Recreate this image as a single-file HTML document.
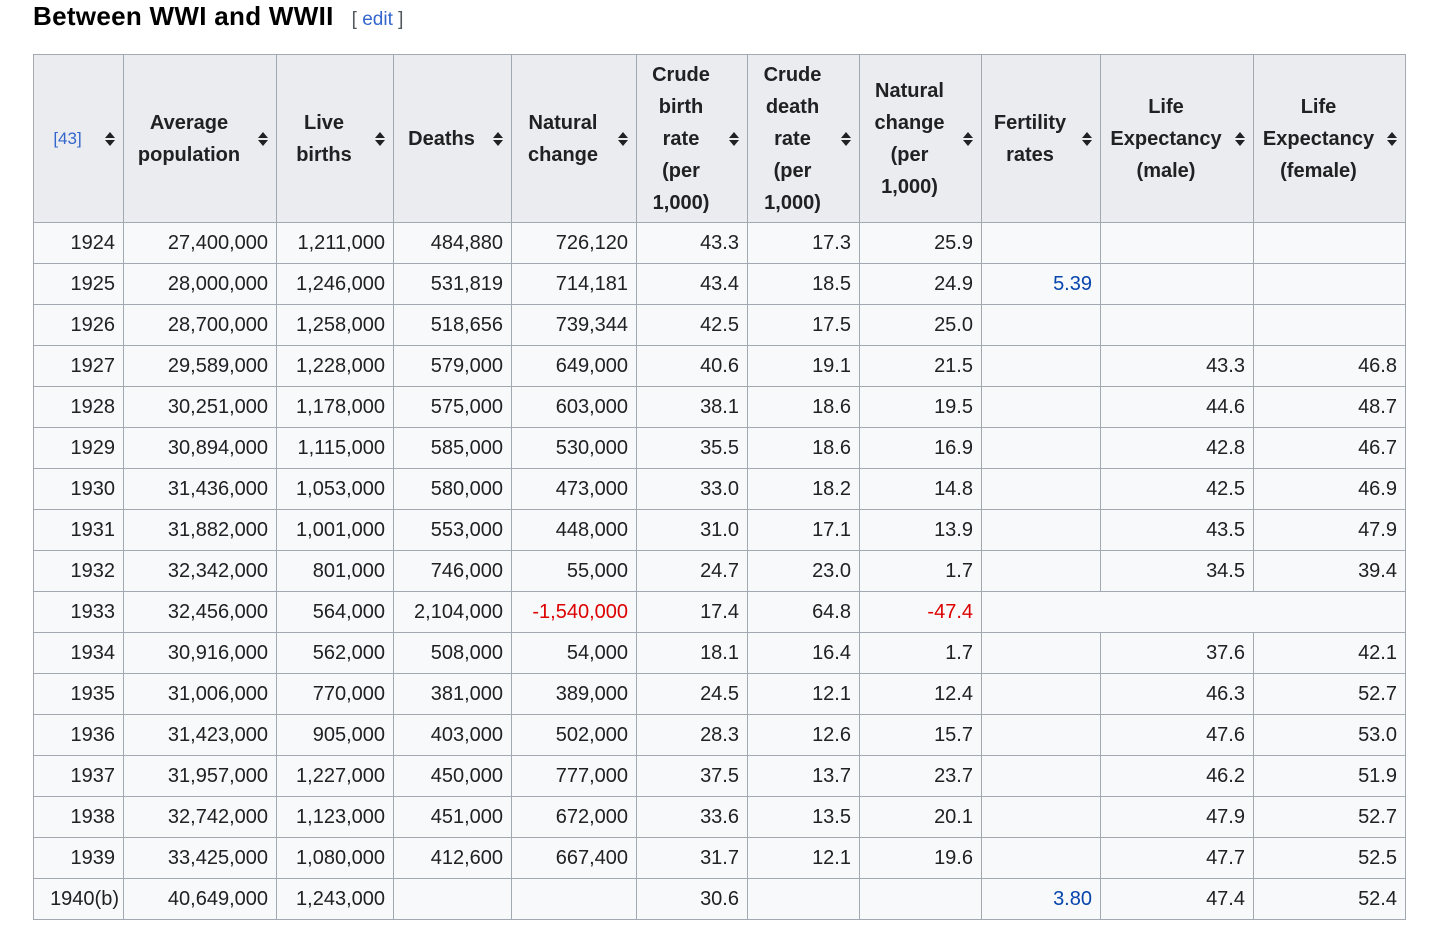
<!DOCTYPE html>
<html><head><meta charset="utf-8"><style>
body{margin:0;background:#fff;font-family:"Liberation Sans",sans-serif;color:#202122;width:1440px;height:941px;overflow:hidden;position:relative}
h2{position:absolute;left:33px;top:0;margin:0;font-size:26px;font-weight:bold;line-height:32px;color:#000;letter-spacing:0.3px}
h2 span{font-weight:normal;font-size:19px;color:#54595d;margin-left:18px;letter-spacing:0}
h2 span a{color:#3366cc}
table{position:absolute;left:33px;top:54px;border-collapse:collapse;table-layout:fixed;width:1372px;font-size:20px}
th,td{border:1px solid #a2a9b1;padding:0 8px}
th{background:#eaecf0;height:167px;line-height:32px;font-weight:bold;position:relative;padding:0 26px 0 4px;text-align:center;white-space:nowrap}
th svg{position:absolute;right:8px;top:50%;margin-top:-8px}
td{background:#f8f9fa;height:40px;text-align:right;white-space:nowrap}
.b{color:#0645ad}.r{color:#d00}
</style></head><body>
<h2>Between WWI and WWII<span>[ <a>edit</a> ]</span></h2>
<table>
<colgroup><col style="width:90px"><col style="width:153px"><col style="width:117px"><col style="width:118px"><col style="width:125px"><col style="width:111px"><col style="width:112px"><col style="width:122px"><col style="width:119px"><col style="width:153px"><col style="width:152px"></colgroup>
<tr>
<th><span style="color:#3366cc;font-weight:normal;font-size:17px">[43]</span><svg width="10" height="16"><path d="M5 1L10 7H0Z M5 15L10 9H0Z" fill="#202122"/></svg></th>
<th>Average<br>population<svg width="10" height="16"><path d="M5 1L10 7H0Z M5 15L10 9H0Z" fill="#202122"/></svg></th>
<th>Live<br>births<svg width="10" height="16"><path d="M5 1L10 7H0Z M5 15L10 9H0Z" fill="#202122"/></svg></th>
<th>Deaths<svg width="10" height="16"><path d="M5 1L10 7H0Z M5 15L10 9H0Z" fill="#202122"/></svg></th>
<th>Natural<br>change<svg width="10" height="16"><path d="M5 1L10 7H0Z M5 15L10 9H0Z" fill="#202122"/></svg></th>
<th>Crude<br>birth<br>rate<br>(per<br>1,000)<svg width="10" height="16"><path d="M5 1L10 7H0Z M5 15L10 9H0Z" fill="#202122"/></svg></th>
<th>Crude<br>death<br>rate<br>(per<br>1,000)<svg width="10" height="16"><path d="M5 1L10 7H0Z M5 15L10 9H0Z" fill="#202122"/></svg></th>
<th>Natural<br>change<br>(per<br>1,000)<svg width="10" height="16"><path d="M5 1L10 7H0Z M5 15L10 9H0Z" fill="#202122"/></svg></th>
<th>Fertility<br>rates<svg width="10" height="16"><path d="M5 1L10 7H0Z M5 15L10 9H0Z" fill="#202122"/></svg></th>
<th>Life<br>Expectancy<br>(male)<svg width="10" height="16"><path d="M5 1L10 7H0Z M5 15L10 9H0Z" fill="#202122"/></svg></th>
<th>Life<br>Expectancy<br>(female)<svg width="10" height="16"><path d="M5 1L10 7H0Z M5 15L10 9H0Z" fill="#202122"/></svg></th>
</tr>
<tr><td>1924</td><td>27,400,000</td><td>1,211,000</td><td>484,880</td><td>726,120</td><td>43.3</td><td>17.3</td><td>25.9</td><td></td><td></td><td></td></tr>
<tr><td>1925</td><td>28,000,000</td><td>1,246,000</td><td>531,819</td><td>714,181</td><td>43.4</td><td>18.5</td><td>24.9</td><td class="b">5.39</td><td></td><td></td></tr>
<tr><td>1926</td><td>28,700,000</td><td>1,258,000</td><td>518,656</td><td>739,344</td><td>42.5</td><td>17.5</td><td>25.0</td><td></td><td></td><td></td></tr>
<tr><td>1927</td><td>29,589,000</td><td>1,228,000</td><td>579,000</td><td>649,000</td><td>40.6</td><td>19.1</td><td>21.5</td><td></td><td>43.3</td><td>46.8</td></tr>
<tr><td>1928</td><td>30,251,000</td><td>1,178,000</td><td>575,000</td><td>603,000</td><td>38.1</td><td>18.6</td><td>19.5</td><td></td><td>44.6</td><td>48.7</td></tr>
<tr><td>1929</td><td>30,894,000</td><td>1,115,000</td><td>585,000</td><td>530,000</td><td>35.5</td><td>18.6</td><td>16.9</td><td></td><td>42.8</td><td>46.7</td></tr>
<tr><td>1930</td><td>31,436,000</td><td>1,053,000</td><td>580,000</td><td>473,000</td><td>33.0</td><td>18.2</td><td>14.8</td><td></td><td>42.5</td><td>46.9</td></tr>
<tr><td>1931</td><td>31,882,000</td><td>1,001,000</td><td>553,000</td><td>448,000</td><td>31.0</td><td>17.1</td><td>13.9</td><td></td><td>43.5</td><td>47.9</td></tr>
<tr><td>1932</td><td>32,342,000</td><td>801,000</td><td>746,000</td><td>55,000</td><td>24.7</td><td>23.0</td><td>1.7</td><td></td><td>34.5</td><td>39.4</td></tr>
<tr><td>1933</td><td>32,456,000</td><td>564,000</td><td>2,104,000</td><td class="r">-1,540,000</td><td>17.4</td><td>64.8</td><td class="r">-47.4</td><td colspan="3"></td></tr>
<tr><td>1934</td><td>30,916,000</td><td>562,000</td><td>508,000</td><td>54,000</td><td>18.1</td><td>16.4</td><td>1.7</td><td></td><td>37.6</td><td>42.1</td></tr>
<tr><td>1935</td><td>31,006,000</td><td>770,000</td><td>381,000</td><td>389,000</td><td>24.5</td><td>12.1</td><td>12.4</td><td></td><td>46.3</td><td>52.7</td></tr>
<tr><td>1936</td><td>31,423,000</td><td>905,000</td><td>403,000</td><td>502,000</td><td>28.3</td><td>12.6</td><td>15.7</td><td></td><td>47.6</td><td>53.0</td></tr>
<tr><td>1937</td><td>31,957,000</td><td>1,227,000</td><td>450,000</td><td>777,000</td><td>37.5</td><td>13.7</td><td>23.7</td><td></td><td>46.2</td><td>51.9</td></tr>
<tr><td>1938</td><td>32,742,000</td><td>1,123,000</td><td>451,000</td><td>672,000</td><td>33.6</td><td>13.5</td><td>20.1</td><td></td><td>47.9</td><td>52.7</td></tr>
<tr><td>1939</td><td>33,425,000</td><td>1,080,000</td><td>412,600</td><td>667,400</td><td>31.7</td><td>12.1</td><td>19.6</td><td></td><td>47.7</td><td>52.5</td></tr>
<tr><td style="padding:0 4px">1940(b)</td><td>40,649,000</td><td>1,243,000</td><td></td><td></td><td>30.6</td><td></td><td></td><td class="b">3.80</td><td>47.4</td><td>52.4</td></tr>
</table>
</body></html>
